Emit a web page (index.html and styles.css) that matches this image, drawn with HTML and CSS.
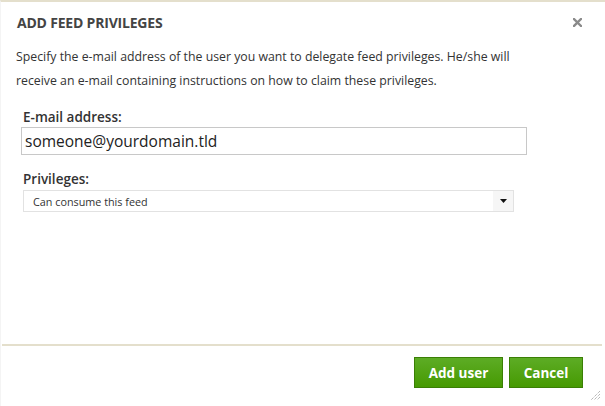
FILE: index.html
```html
<!DOCTYPE html>
<html>
<head>
<meta charset="utf-8">
<link rel="stylesheet" href="styles.css">
</head>
<body>
<div class="dialog">
  <div class="header">
    <h1 class="title">ADD FEED PRIVILEGES</h1>
    <svg class="close" width="9" height="9" viewBox="0 0 9 9"><path d="M1 1L8 8M8 1L1 8" stroke="#8a8a8a" stroke-width="2.4" stroke-linecap="square"/></svg>
  </div>
  <div class="content">
    <p class="intro">Specify the e-mail address of the user you want to delegate feed privileges. He/she will receive an e-mail containing instructions on how to claim these privileges.</p>
    <div class="field">
      <label class="label">E-mail address:</label>
      <div class="input">someone@yourdomain.tld</div>
    </div>
    <div class="field">
      <label class="label">Privileges:</label>
      <div class="select">
        <span class="select-text">Can consume this feed</span>
        <span class="select-arrow"><svg width="7" height="4" viewBox="0 0 7 4"><path d="M0 0h7L3.5 4z" fill="#111"/></svg></span>
      </div>
    </div>
  </div>
  <div class="footer">
    <button class="btn btn-add">Add user</button>
    <button class="btn btn-cancel">Cancel</button>
  </div>
  <svg class="grip" width="11" height="11" viewBox="0 0 11 11"><path d="M10 1L1 10M10 4L4 10M10 7L7 10" stroke="#999" stroke-width="1" stroke-dasharray="1 1"/></svg>
</div>
</body>
</html>
```
FILE: styles.css
```css
html, body {
  margin: 0;
  padding: 0;
  background: #fff;
}
.dialog {
  position: relative;
  width: 605px;
  height: 406px;
  box-sizing: border-box;
  border-top: 2px solid #e4dfcc;
  border-left: 1px solid #f4f4f4;
  font-family: "Open Sans", "Noto Sans", sans-serif;
  color: #333;
  display: flex;
  flex-direction: column;
}
.header {
  display: flex;
  justify-content: space-between;
  align-items: center;
  padding: 0 23px 0 16px;
  height: 40px;
  flex: none;
}
.title {
  margin: 0;
  font-size: 14px;
  font-weight: 700;
  color: #444;
  letter-spacing: -0.2px;
}
.content {
  flex: 1;
  padding: 3px 20px 0 15px;
}
.intro {
  margin: 0 0 15px 0;
  max-width: 520px;
  font-size: 12.3px;
  line-height: 24px;
  color: #333;
}
.field {
  padding-left: 5px;
  margin-bottom: 15px;
}
.label {
  display: block;
  font-size: 13.5px;
  font-weight: 600;
  color: #333;
  line-height: 18px;
  margin-left: 2px;
  margin-bottom: 1px;
}
.input {
  width: 506px;
  height: 28px;
  box-sizing: border-box;
  border: 1px solid #c8c8c8;
  font-size: 15.5px;
  line-height: 26px;
  padding-left: 3px;
  color: #222;
}
.select {
  margin-left: 2px;
  margin-top: 2px;
  width: 491px;
  height: 22px;
  box-sizing: border-box;
  border: 1px solid #e2e2e2;
  display: flex;
  align-items: center;
  justify-content: space-between;
}
.select-text {
  font-size: 10.8px;
  padding-left: 9px;
  color: #333;
}
.select-arrow {
  width: 20px;
  height: 20px;
  background: #f6f6f6;
  display: flex;
  align-items: center;
  justify-content: center;
}
.footer {
  flex: none;
  margin: 0 3px 0 1px;
  border-top: 2px solid #e4dfcc;
  height: 62px;
  display: flex;
  justify-content: flex-end;
  align-items: flex-start;
  gap: 6px;
  padding: 11px 19px 0 0;
  box-sizing: border-box;
}
.btn {
  font-family: "Open Sans", "Noto Sans", sans-serif;
  font-size: 13.5px;
  font-weight: 700;
  color: #fff;
  height: 31px;
  padding: 0;
  border: 1px solid #3a7f05;
  background: linear-gradient(#5dac25, #469a02);
}
.btn-add {
  width: 89px;
}
.btn-cancel {
  width: 74px;
}
.grip {
  position: absolute;
  right: 4px;
  bottom: 5px;
}
```
